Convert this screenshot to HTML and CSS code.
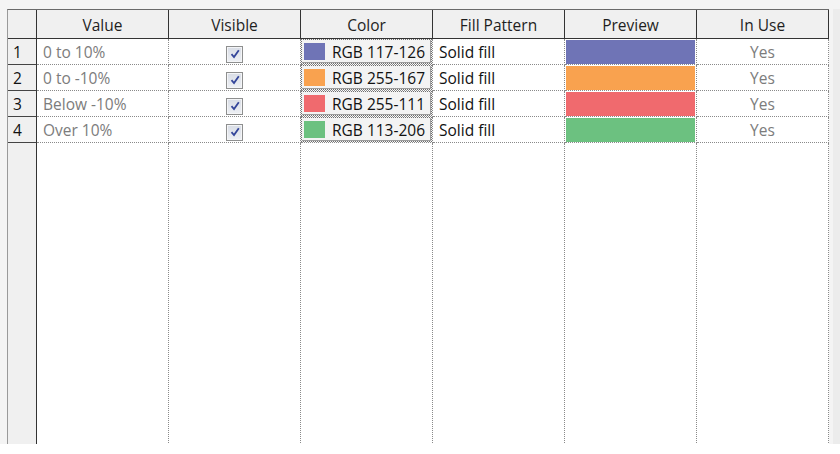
FILE: index.html
```html
<!DOCTYPE html>
<html lang="en">
<head>
    <meta charset="UTF-8">
    <title>Legend Scheme</title>
    <link rel="stylesheet" href="styles.css">
</head>
<body>
    <div id="frame">
        <table id="grid">
            <thead>
                <tr>
                    <th class="corner"></th>
                    <th>Value</th>
                    <th>Visible</th>
                    <th>Color</th>
                    <th>Fill Pattern</th>
                    <th>Preview</th>
                    <th>In Use</th>
                </tr>
            </thead>
            <tbody>
                <tr>
                    <th class="rownum">1</th>
                    <td class="value">0 to 10%</td>
                    <td class="visible"><span class="check"><svg width="10" height="10" viewBox="0 0 10 10"><path d="M1.5 5.2 L4 8 L8.8 1.2" fill="none" stroke="#34469a" stroke-width="1.8"/></svg></span></td>
                    <td class="color"><div class="color_btn"><span class="swatch c_blue"></span>RGB 117-126</div></td>
                    <td class="fill">Solid fill</td>
                    <td class="preview"><div class="bar c_blue"></div></td>
                    <td class="inuse">Yes</td>
                </tr>
                <tr>
                    <th class="rownum">2</th>
                    <td class="value">0 to -10%</td>
                    <td class="visible"><span class="check"><svg width="10" height="10" viewBox="0 0 10 10"><path d="M1.5 5.2 L4 8 L8.8 1.2" fill="none" stroke="#34469a" stroke-width="1.8"/></svg></span></td>
                    <td class="color"><div class="color_btn"><span class="swatch c_orange"></span>RGB 255-167</div></td>
                    <td class="fill">Solid fill</td>
                    <td class="preview"><div class="bar c_orange"></div></td>
                    <td class="inuse">Yes</td>
                </tr>
                <tr>
                    <th class="rownum">3</th>
                    <td class="value">Below -10%</td>
                    <td class="visible"><span class="check"><svg width="10" height="10" viewBox="0 0 10 10"><path d="M1.5 5.2 L4 8 L8.8 1.2" fill="none" stroke="#34469a" stroke-width="1.8"/></svg></span></td>
                    <td class="color"><div class="color_btn"><span class="swatch c_red"></span>RGB 255-111</div></td>
                    <td class="fill">Solid fill</td>
                    <td class="preview"><div class="bar c_red"></div></td>
                    <td class="inuse">Yes</td>
                </tr>
                <tr>
                    <th class="rownum">4</th>
                    <td class="value">Over 10%</td>
                    <td class="visible"><span class="check"><svg width="10" height="10" viewBox="0 0 10 10"><path d="M1.5 5.2 L4 8 L8.8 1.2" fill="none" stroke="#34469a" stroke-width="1.8"/></svg></span></td>
                    <td class="color"><div class="color_btn"><span class="swatch c_green"></span>RGB 113-206</div></td>
                    <td class="fill">Solid fill</td>
                    <td class="preview"><div class="bar c_green"></div></td>
                    <td class="inuse">Yes</td>
                </tr>
                <tr class="filler">
                    <th class="rownum"></th>
                    <td></td>
                    <td></td>
                    <td></td>
                    <td></td>
                    <td></td>
                    <td></td>
                </tr>
            </tbody>
        </table>
        <div class="track"></div>
    </div>
</body>
</html>
```

FILE: styles.css
```css
* {
    box-sizing: border-box;
}
body {
    margin: 0;
    background: #fff;
    font-family: "Open Sans", "DejaVu Sans", sans-serif;
    font-size: 15.5px;
    color: #111;
}
#frame {
    display: flex;
    align-items: flex-start;
    height: 444px;
    padding: 9px 0 0 7px;
    background: #f4f4f4;
    overflow: hidden;
}
#grid {
    table-layout: fixed;
    border-collapse: separate;
    border-spacing: 0;
    width: 822px;
    border-left: 1px solid #9a9a9a;
    border-top: 1px solid #6a6a6a;
    background: #fff;
}
th, td {
    padding: 0;
    font-weight: normal;
    white-space: nowrap;
    overflow: hidden;
}
thead th {
    width: 132px;
    height: 29px;
    background: #f0f0f0;
    border-right: 1px solid #333;
    border-bottom: 1px solid #333;
    color: #1e1e1e;
    text-align: center;
    padding-top: 1px;
}
thead th.corner {
    width: 29px;
}
td {
    height: 26px;
    border-right: 1px dotted #8a8a8a;
    border-bottom: 1px dotted #8a8a8a;
}
.rownum {
    background: #f0f0f0;
    border-right: 1px solid #333;
    border-bottom: 1px solid #444;
    text-align: left;
    padding-left: 5px;
    color: #111;
}
.value {
    padding-left: 6px;
    color: #7c7c7c;
}
.visible {
    text-align: center;
}
.check {
    display: inline-flex;
    align-items: center;
    justify-content: center;
    width: 17px;
    height: 17px;
    margin-top: 2px;
    vertical-align: middle;
    border: 1px solid #8e8f8f;
    background: linear-gradient(#d8dde6, #eef0f4);
    box-shadow: inset 0 0 0 1px #f4f5f7;
}
.color {
    padding: 0;
}
.color_btn {
    display: flex;
    align-items: center;
    gap: 7px;
    height: 25px;
    padding-left: 2px;
    background: #f3f3f3;
    border: 1px dotted #6f6f6f;
    box-shadow: inset -1px -1px 0 #9c9c9c;
    color: #111;
}
.swatch {
    width: 21px;
    height: 17px;
    flex-shrink: 0;
}
.fill {
    padding-left: 6px;
    color: #111;
}
.preview {
    padding: 1px 1px 0 1px;
}
.bar {
    height: 24px;
}
.inuse {
    text-align: center;
    color: #7c7c7c;
}
.filler td,
.filler th {
    height: 302px;
    border-bottom: none;
}
.c_blue {
    background: #6f74b6;
}
.c_orange {
    background: #f9a24f;
}
.c_red {
    background: #f06a6e;
}
.c_green {
    background: #6cc180;
}
.track {
    width: 7px;
    height: 435px;
    margin-left: 4px;
    background: #ececec;
}
```
